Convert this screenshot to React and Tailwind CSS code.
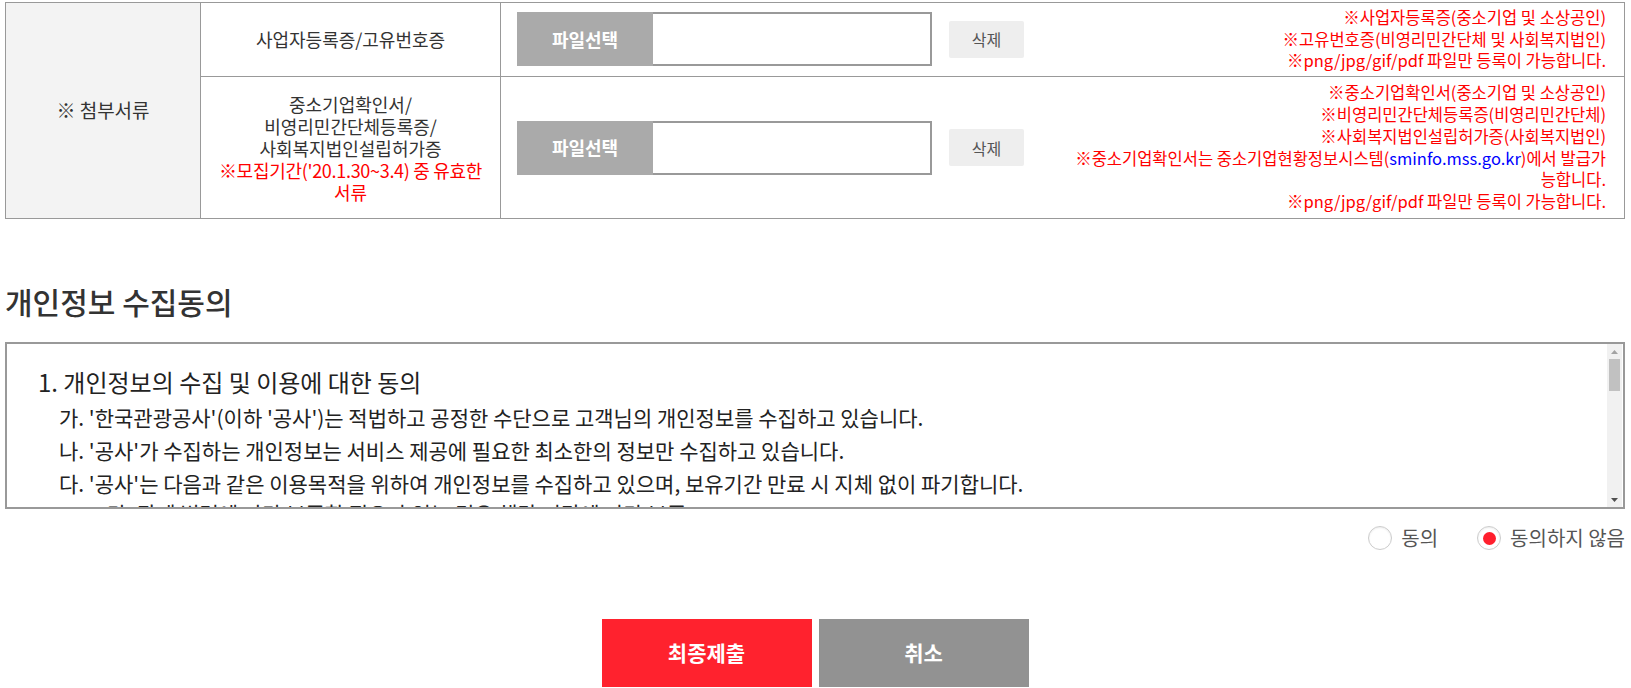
import React from 'react';

const FONT = "font-['Noto_Sans_CJK_KR','Noto_Sans',sans-serif]";

const notesBiz = [
  '※사업자등록증(중소기업 및 소상공인)',
  '※고유번호증(비영리민간단체 및 사회복지법인)',
  '※png/jpg/gif/pdf 파일만 등록이 가능합니다.',
];

const FileBox = () => (
  <div className="flex items-center">
    <div className="flex h-[54px] w-[415px]">
      <span className="flex w-[136px] items-center justify-center bg-[#aaaaaa] text-[18px] font-bold text-white">
        파일선택
      </span>
      <span className="flex-1 border-2 border-l-0 border-[#999999] bg-white" />
    </div>
    <button className="ml-[17px] h-[37px] w-[75px] rounded-[2px] bg-[#eeeeee] text-[16px] text-[#555555]">
      삭제
    </button>
  </div>
);

const Radio = ({ checked, label }) => (
  <label className="flex items-center">
    <span className="flex h-[24px] w-[24px] items-center justify-center rounded-full border border-[#cccccc] bg-white shadow-[inset_0_1px_2px_rgba(0,0,0,0.08)]">
      {checked && <span className="h-[13px] w-[13px] rounded-full bg-[#ff1f2d]" />}
    </span>
    <span className="ml-[9px] text-[20px] text-[#555555]">{label}</span>
  </label>
);

// 스크롤바 (헤드리스에서는 기본 스크롤바가 안 보여서 직접 그림)
const ScrollBar = () => (
  <div className="mr-[1px] flex w-[15px] flex-col bg-[#f1f1f1]">
    <div className="flex h-[15px] items-center justify-center">
      <svg width="7" height="4" viewBox="0 0 7 4">
        <polygon points="0,4 7,4 3.5,0" fill="#a3a3a3" />
      </svg>
    </div>
    <div className="mx-[2px] h-[32px] bg-[#c1c1c1]" />
    <div className="flex-1" />
    <div className="flex h-[15px] items-center justify-center">
      <svg width="7" height="4" viewBox="0 0 7 4">
        <polygon points="0,0 7,0 3.5,4" fill="#505050" />
      </svg>
    </div>
  </div>
);

const App = () => {
  return (
    <div className={`${FONT} w-[1625px] pl-[5px] pt-[2px] bg-white`}>
      <table className="w-full table-fixed border-collapse text-[#333333]">
        <colgroup>
          <col className="w-[195px]" />
          <col className="w-[300px]" />
          <col />
        </colgroup>
        <tbody>
          <tr>
            <td rowSpan={2} className="border border-[#999999] bg-[#f3f3f3] text-center text-[19px]">
              ※ 첨부서류
            </td>
            <td className="h-[74px] border border-[#999999] px-[10px] text-center text-[18px]">
              사업자등록증/고유번호증
            </td>
            <td className="border border-[#999999] pl-[16px] pr-[18px]">
              <div className="flex items-center justify-between">
                <FileBox />
                <div className="text-right text-[16.5px] leading-[21.7px] text-[#ff0000]">
                  {notesBiz.map((n) => (
                    <div key={n}>{n}</div>
                  ))}
                </div>
              </div>
            </td>
          </tr>
          <tr>
            <td className="h-[142px] border border-[#999999] px-[6px] text-center text-[18px] leading-[22px]">
              중소기업확인서/
              <br />
              비영리민간단체등록증/
              <br />
              사회복지법인설립허가증
              <br />
              <span className="whitespace-nowrap tracking-[-0.3px] text-[#ff0000]">
                ※모집기간('20.1.30~3.4) 중 유효한
              </span>
              <br />
              <span className="text-[#ff0000]">서류</span>
            </td>
            <td className="border border-[#999999] pl-[16px] pr-[18px]">
              <div className="flex items-center justify-between">
                <FileBox />
                <div className="text-right text-[16.5px] leading-[21.7px] text-[#ff0000]">
                  <div>※중소기업확인서(중소기업 및 소상공인)</div>
                  <div>※비영리민간단체등록증(비영리민간단체)</div>
                  <div>※사회복지법인설립허가증(사회복지법인)</div>
                  <div>
                    ※중소기업확인서는 중소기업현황정보시스템(
                    <span className="text-[#0000ff]">sminfo.mss.go.kr</span>)에서 발급가
                  </div>
                  <div>능합니다.</div>
                  <div>※png/jpg/gif/pdf 파일만 등록이 가능합니다.</div>
                </div>
              </div>
            </td>
          </tr>
        </tbody>
      </table>

      <h2 className="mt-[64px] text-[30px] font-medium leading-[36px] text-[#333333]">개인정보 수집동의</h2>

      <div className="mt-[23px] flex h-[167px] border-2 border-[#999999] bg-white">
        <div className="flex-1 overflow-hidden pl-[31px] pt-[19px] text-[#222222]">
          <p className="text-[24px] leading-[38px]">1. 개인정보의 수집 및 이용에 대한 동의</p>
          <div className="pl-[21px] text-[21px] leading-[33px]">
            <p>가. '한국관광공사'(이하 '공사')는 적법하고 공정한 수단으로 고객님의 개인정보를 수집하고 있습니다.</p>
            <p>나. '공사'가 수집하는 개인정보는 서비스 제공에 필요한 최소한의 정보만 수집하고 있습니다.</p>
            <p>다. '공사'는 다음과 같은 이용목적을 위하여 개인정보를 수집하고 있으며, 보유기간 만료 시 지체 없이 파기합니다.</p>
            <p className="-mt-[3px] pl-[36px]">- 단, 관계 법령에 따라 보존할 필요가 있는 경우 해당 기간에 따라 보존</p>
            <p>라. 수집 항목 : 업체명, 대표자명, 사업자등록번호, 주소, 연락처, 이메일</p>
          </div>
        </div>
        <ScrollBar />
      </div>

      <div className="mt-[14px] flex justify-end gap-[39px]">
        <Radio label="동의" />
        <Radio checked label="동의하지 않음" />
      </div>

      <div className="mt-[66px] flex justify-center gap-[7px]">
        <button className="h-[68px] w-[210px] bg-[#ff222e] text-[21px] font-bold text-white">최종제출</button>
        <button className="h-[68px] w-[210px] bg-[#929292] text-[21px] font-bold text-white">취소</button>
      </div>
    </div>
  );
};

export default App;
